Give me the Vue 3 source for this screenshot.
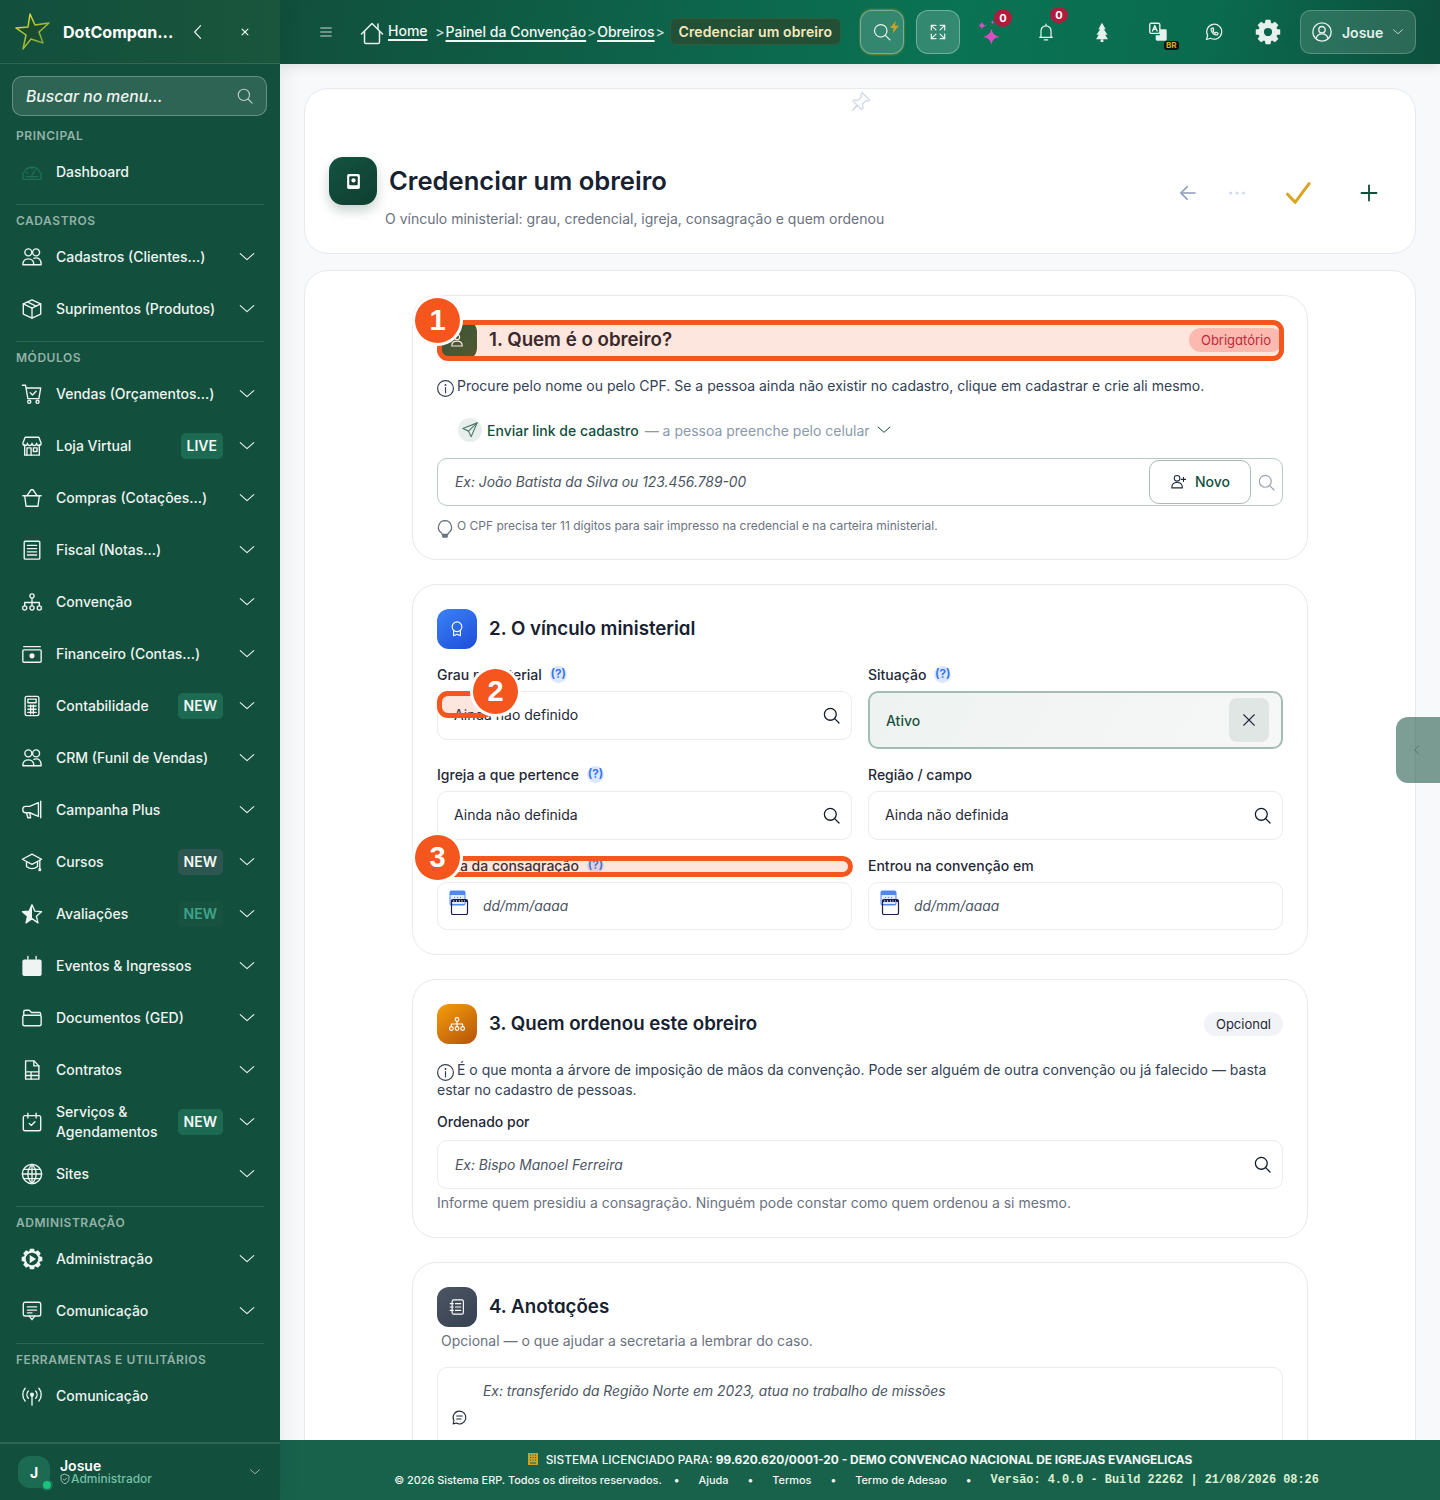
<template>
  <div class="shell">
    <aside class="sidebar">
      <div class="brand">
        <svg class="logo" viewBox="0 0 36 38">
          <defs>
            <linearGradient id="star" x1="0" y1="0" x2="1" y2="1">
              <stop offset="0" stop-color="#f4e83c" />
              <stop offset="1" stop-color="#5c9a34" />
            </linearGradient>
          </defs>
          <path d="M15 1L20 12L34 10L24 19L28 30L16 26L8 36L11 22L1 15L13 14z" fill="#1a4a30" stroke="url(#star)" stroke-width="1.5" stroke-linejoin="round" />
        </svg>
        <span class="brand-name">DotCompan...</span>
        <Icon name="chevL" class="brand-btn" />
        <Icon name="close" class="brand-x" />
      </div>

      <div class="menu-search">
        <span>Buscar no menu...</span>
        <Icon name="search" class="menu-search-ico" />
      </div>

      <nav class="nav">
        <div v-for="(group, i) in menu" :key="group.title" class="group">
          <div v-if="i > 0" class="group-line"></div>
          <div class="group-title">{{ group.title }}</div>
          <div v-for="item in group.items" :key="group.title + item.label" class="item">
            <Icon :name="item.icon" class="item-ico" :class="{ dim: item.dim }" />
            <span class="item-label">{{ item.label }}</span>
            <span v-if="item.tag" class="tag" :class="item.tagClass">{{ item.tag }}</span>
            <Icon v-if="!item.leaf" name="chevD" class="item-chev" />
          </div>
        </div>
      </nav>

      <div class="side-user">
        <div class="avatar">J<i class="online"></i></div>
        <div class="who">
          <b>Josue</b>
          <span><Icon name="shield" class="shield" />Administrador</span>
        </div>
        <Icon name="chevD" class="user-chev" />
      </div>
    </aside>

    <div class="main">
      <header class="topbar">
        <Icon name="menu" class="burger" />
        <div class="crumbs">
          <Icon name="home" class="home" />
          <a class="home-link">Home</a>
          <em class="first">&gt;</em>
          <a>Painel da Convenção</a>
          <em>&gt;</em>
          <a>Obreiros</a>
          <em>&gt;</em>
          <span class="crumb-now">Credenciar um obreiro</span>
        </div>
        <div class="tools">
          <button class="tool-btn glow">
            <Icon name="search" class="tool-search" />
            <svg class="bolt" viewBox="0 0 10 14"><path d="M6.5 0L0 8h4l-1 6 7-8.5H5.5z" fill="#c9a227" /></svg>
          </button>
          <button class="tool-btn"><Icon name="expand" class="tool-expand" /></button>
          <div class="tool spark">
            <Icon name="spark" class="spark-ico" />
            <span class="count">0</span>
          </div>
          <div class="tool bell">
            <Icon name="bell" class="tool-ico" />
            <span class="count">0</span>
          </div>
          <div class="tool tree"><Icon name="tree" class="tool-ico" /></div>
          <div class="tool lang">
            <Icon name="translate" class="tool-ico" />
            <span class="br">BR</span>
          </div>
          <div class="tool wa"><Icon name="whats" class="tool-ico" /></div>
          <div class="tool cog"><Icon name="gearFill" class="cog-ico" /></div>
          <button class="user-btn">
            <Icon name="userCircle" class="user-ico" />
            <span>Josue</span>
            <Icon name="chevD" class="user-btn-chev" />
          </button>
        </div>
      </header>

      <div class="content">
        <section class="card page-card">
          <div class="pin-row"><Icon name="pin" class="pin" /></div>
          <div class="page-head">
            <div>
              <div class="title-row">
                <div class="page-ico">
                  <svg viewBox="0 0 14 16" class="page-ico-svg">
                    <rect x="1" y="1" width="12" height="14" rx="1.5" fill="#fff" />
                    <rect x="3" y="3" width="8" height="8.500" rx="1" fill="#123f30" />
                    <circle cx="7" cy="7" r="2" fill="#fff" />
                  </svg>
                </div>
                <h1>Credenciar um obreiro</h1>
              </div>
              <p class="page-sub">O vínculo ministerial: grau, credencial, igreja, consagração e quem ordenou</p>
            </div>
            <div class="page-actions">
              <Icon name="arrowL" class="act back" />
              <Icon name="dots" class="act more" />
              <Icon name="check" class="act ok" />
              <Icon name="plus" class="act add" />
            </div>
          </div>
        </section>

        <section class="card form-card">
          <div class="block">
            <div class="block-head">
              <div class="block-ico green"><Icon name="userLine" class="block-svg" /></div>
              <h2>1. Quem é o obreiro?</h2>
              <span class="req">Obrigatório</span>
              <div class="mark"></div>
              <div class="num num1">1</div>
            </div>
            <p class="info"><Icon name="info" class="info-ico" />Procure pelo nome ou pelo CPF. Se a pessoa ainda não existir no cadastro, clique em cadastrar e crie ali mesmo.</p>
            <div class="send">
              <span class="send-ico"><Icon name="send" class="send-svg" /></span>
              <strong>Enviar link de cadastro</strong>
              <span class="send-note">— a pessoa preenche pelo celular</span>
              <Icon name="chevD" class="send-chev" />
            </div>
            <div class="box box-main">
              <span class="ph">Ex: João Batista da Silva ou 123.456.789-00</span>
              <button class="novo"><Icon name="userPlus" class="novo-ico" />Novo</button>
              <Icon name="search" class="box-search" />
            </div>
            <p class="tip"><Icon name="bulb" class="tip-ico" />O CPF precisa ter 11 dígitos para sair impresso na credencial e na carteira ministerial.</p>
          </div>

          <div class="block">
            <div class="block-head">
              <div class="block-ico blue"><Icon name="award" class="block-svg" /></div>
              <h2>2. O vínculo ministerial</h2>
            </div>
            <div class="grid">
              <div class="field">
                <label>Grau ministerial <i class="help">(?)</i></label>
                <div class="box"><span class="val">Ainda não definido</span><Icon name="search" class="lens" /></div>
                <div class="mark mark2"></div>
                <div class="num num2">2</div>
              </div>
              <div class="field">
                <label>Situação <i class="help">(?)</i></label>
                <div class="box active">
                  <span>Ativo</span>
                  <button class="clear"><Icon name="close" class="clear-ico" /></button>
                </div>
              </div>
              <div class="field">
                <label>Igreja a que pertence <i class="help">(?)</i></label>
                <div class="box"><span class="val">Ainda não definida</span><Icon name="search" class="lens" /></div>
              </div>
              <div class="field">
                <label>Região / campo</label>
                <div class="box"><span class="val">Ainda não definida</span><Icon name="search" class="lens" /></div>
              </div>
              <div class="field">
                <label>Data da consagração <i class="help">(?)</i></label>
                <div class="box date">
                  <svg class="date-ico" viewBox="0 0 20 25">
                    <rect x="0.5" y="0.5" width="16" height="15" rx="2" fill="#4f86f0" />
                    <rect x="1.5" y="5" width="14" height="9" fill="#dfe9fd" />
                    <path d="M5 7.500h1M8 7.500h1M11 7.500h1" stroke="#4f86f0" />
                    <rect x="2.500" y="9.500" width="16" height="15" rx="1.500" fill="none" stroke="#1c1b4b" stroke-width="1.200" />
                    <path d="M2.500 11h16" stroke="#1c1b4b" stroke-width="2" stroke-dasharray="2 .7" />
                  </svg>
                  <span class="ph">dd/mm/aaaa</span>
                </div>
                <div class="mark mark3"></div>
                <div class="num num3">3</div>
              </div>
              <div class="field">
                <label>Entrou na convenção em</label>
                <div class="box date">
                  <svg class="date-ico" viewBox="0 0 20 25">
                    <rect x="0.5" y="0.5" width="16" height="15" rx="2" fill="#4f86f0" />
                    <rect x="1.5" y="5" width="14" height="9" fill="#dfe9fd" />
                    <path d="M5 7.500h1M8 7.500h1M11 7.500h1" stroke="#4f86f0" />
                    <rect x="2.500" y="9.500" width="16" height="15" rx="1.500" fill="none" stroke="#1c1b4b" stroke-width="1.200" />
                    <path d="M2.500 11h16" stroke="#1c1b4b" stroke-width="2" stroke-dasharray="2 .7" />
                  </svg>
                  <span class="ph">dd/mm/aaaa</span>
                </div>
              </div>
            </div>
          </div>

          <div class="block">
            <div class="block-head">
              <div class="block-ico orange"><Icon name="tree3" class="block-svg" /></div>
              <h2>3. Quem ordenou este obreiro</h2>
              <span class="opt">Opcional</span>
            </div>
            <p class="info info-wrap"><Icon name="info" class="info-ico" />É o que monta a árvore de imposição de mãos da convenção. Pode ser alguém de outra convenção ou já falecido — basta estar no cadastro de pessoas.</p>
            <label class="solo">Ordenado por</label>
            <div class="box">
              <span class="ph">Ex: Bispo Manoel Ferreira</span>
              <Icon name="search" class="lens" />
            </div>
            <p class="note">Informe quem presidiu a consagração. Ninguém pode constar como quem ordenou a si mesmo.</p>
          </div>

          <div class="block">
            <div class="block-head">
              <div class="block-ico slate"><Icon name="notebook" class="block-svg" /></div>
              <h2>4. Anotações</h2>
            </div>
            <p class="notes-sub">Opcional — o que ajudar a secretaria a lembrar do caso.</p>
            <div class="area">
              <span class="ph">Ex: transferido da Região Norte em 2023, atua no trabalho de missões</span>
              <Icon name="chat" class="area-ico" />
            </div>
          </div>
        </section>
      </div>

      <footer class="bottom">
        <div class="lic">
          <svg class="lic-ico" viewBox="0 0 10 12">
            <path d="M0 0h10v12H0z" fill="#c9a227" />
            <path d="M2 2h1M4.500 2h1M7 2h1M2 4.500h1M4.500 4.500h1M7 4.500h1M2 7h1M4.500 7h1M7 7h1M2 10h6" stroke="#18624c" />
          </svg>
          <span>SISTEMA LICENCIADO PARA: <b>99.620.620/0001-20 - DEMO CONVENCAO NACIONAL DE IGREJAS EVANGELICAS</b></span>
        </div>
        <div class="legal">
          <span>© 2026 Sistema ERP. Todos os direitos reservados.</span>
          <i>•</i><a>Ajuda</a>
          <i>•</i><a>Termos</a>
          <i>•</i><a>Termo de Adesao</a>
          <i>•</i><code>Versão: 4.0.0 - Build 22262 | 21/08/2026 08:26</code>
        </div>
      </footer>

      <div class="side-tab"><Icon name="chevL" class="side-tab-ico" /></div>
    </div>
  </div>
</template>

<script setup>
import { h } from 'vue'

// small helpers so the icon table stays readable
const c = (x, y, r) => `M${x - r} ${y}a${r} ${r} 0 1 0 ${2 * r} 0a${r} ${r} 0 1 0 ${-2 * r} 0z`
const r = (x, y, w, hh, q = 0) =>
  `M${x + q} ${y}h${w - 2 * q}a${q} ${q} 0 0 1 ${q} ${q}v${hh - 2 * q}a${q} ${q} 0 0 1 ${-q} ${q}h${-(w - 2 * q)}a${q} ${q} 0 0 1 ${-q} ${-q}v${-(hh - 2 * q)}a${q} ${q} 0 0 1 ${q} ${-q}z`

const gear = (cx, cy, ro, ri, n) => {
  let d = ''
  for (let i = 0; i < n; i++) {
    const a = (i / n) * Math.PI * 2
    const s = Math.PI / n
    const pts = [
      [a - s * 0.5, ro],
      [a + s * 0.5, ro],
      [a + s * 0.85, ri],
      [a + s * 1.15, ri],
    ]
    for (const [ang, rad] of pts) {
      d += `${d ? 'L' : 'M'}${(cx + Math.cos(ang) * rad).toFixed(2)} ${(cy + Math.sin(ang) * rad).toFixed(2)}`
    }
  }
  return d + 'z'
}

const icons = {
  search: [c(10.5, 10.5, 7.5), 'M16 16l5.5 5.5'],
  chevD: ['M3 7.5l9 8 9-8'],
  chevL: ['M15.5 3.5l-8 8.5 8 8.5'],
  close: ['M5 5l14 14M19 5L5 19'],
  plus: ['M12 3v18M3 12h18'],
  check: ['M3 13l6.5 7L21.5 4'],
  arrowL: ['M20.5 12H4', 'M11 4.5L3.5 12l7.5 7.5'],
  dots: ['*' + c(5, 12, 1.7), '*' + c(12, 12, 1.7), '*' + c(19, 12, 1.7)],
  menu: ['M4 6h16M4 12h16M4 18h16'],
  home: ['M1.5 13L12 2.5 22.5 13', 'M18 3v5', 'M4.5 10.5V21a1.5 1.5 0 0 0 1.5 1.5h12a1.5 1.5 0 0 0 1.5-1.5V10.5'],
  expand: ['M4 9.5V4h5.5', 'M4 4l5.5 5.5', 'M20 9.5V4h-5.5', 'M20 4l-5.5 5.5', 'M4 14.5V20h5.5', 'M4 20l5.5-5.5', 'M20 14.5V20h-5.5', 'M20 20l-5.5-5.5'],
  spark: [
    '*M14 9c.8 4.2 2.8 6.2 7 7-4.2.8-6.2 2.8-7 7-.8-4.2-2.8-6.2-7-7 4.2-.8 6.2-2.8 7-7z',
    '*M6 3c.4 2 1.4 3 3.5 3.5C7.4 7 6.4 8 6 10c-.4-2-1.4-3-3.5-3.5C4.6 6 5.6 5 6 3z',
    '*M15 2c.2 1 .7 1.5 1.7 1.7-1 .2-1.5.7-1.7 1.7-.2-1-.7-1.5-1.7-1.7 1-.2 1.5-.7 1.7-1.7z',
  ],
  bell: ['M6 17V10.5a6 6 0 0 1 12 0V17l1.5 1.5h-15z', 'M12 2.5v2', 'M10 21.5h4'],
  tree: ['*M12 2l4 7h-2l4 6h-2.5l3 5H5.5l3-5H6l4-6H8z', '*M10.5 20h3v3h-3z'],
  translate: [r(3, 2.5, 11, 11, 1.5), 'M6 11l2.5-6 2.5 6M7 9h3', '*M14 9h6a1.5 1.5 0 0 1 1.5 1.5V20a1.5 1.5 0 0 1-1.5 1.5h-9A1.5 1.5 0 0 1 9.500 20v-4.500H14z'],
  whats: ['M3 21l1.4-5a9 9 0 1 1 3.5 3.500z', 'M8.500 8c-.5 4 3.500 8 7.500 7.500l1-2-2.500-1.200-1 1c-1.200-.5-2.300-1.600-2.800-2.800l1-1L11 7z'],
  gearFill: ['*' + gear(12, 12, 11.5, 8.8, 8) + c(12, 12, 3.8)],
  gear: ['*' + gear(12, 12, 11.5, 9, 8) + c(12, 12, 6.8), '*M9.500 7.500l7 4.500-7 4.500z'],
  userCircle: [c(12, 12, 10), c(12, 9.500, 3.500), 'M5.500 19c1-3.500 3.500-5 6.500-5s5.500 1.500 6.500 5'],
  pin: ['M14 2.500l7.500 7.500-2 1-1.500-.5-3.500 3.500.5 4-1.500 1.500-4-4-5 5 4.500-5.500-4-4L6 10l4 .5L13.500 7 13 5.500z'],
  userLine: [c(12, 8, 3.5), 'M5 20c0-4 3-6.500 7-6.500s7 2.500 7 6.500z'],
  info: [c(12, 12, 10), '*' + c(12, 7.500, 1.200), 'M12 11v6.500'],
  send: ['M21.500 2.500L2.500 10l7.500 3.500L13.500 21z', 'M21.500 2.500L10 13.500'],
  userPlus: [c(10, 7.500, 4), 'M2.500 21c0-5 3.500-7.500 7.500-7.500s7.500 2.500 7.500 7.500z', 'M19 6v6M16 9h6'],
  bulb: ['M12 2a8 8 0 0 0-4.500 14.500c.7.6 1 1.300 1 2h7c0-.7.3-1.400 1-2A8 8 0 0 0 12 2z', '*M8.500 18.500h7V21a1.500 1.500 0 0 1-1.500 1.500h-4A1.500 1.500 0 0 1 8.500 21z'],
  award: [c(12, 9, 6.500), 'M7.500 14.500V21l4.500-2 4.500 2v-6.500'],
  tree3: [c(12, 6, 2.500), c(4.500, 18, 2.500), c(12, 18, 2.500), c(19.500, 18, 2.500), 'M12 8.500v7M4.500 15.500V12h15v3.500'],
  notebook: [r(5.500, 2.500, 15, 19, 2), 'M10 7.500h7M10 12h7M10 16.500h7', 'M3 7.500h4M3 12h4M3 16.500h4'],
  chat: ['M12 3a9 9 0 0 0-7.800 13.500L3 21l4.500-1.200A9 9 0 1 0 12 3z', 'M8 10h8M8 14h6'],
  shield: ['M12 2.500l8 3v6c0 5-3.500 8.500-8 10-4.500-1.500-8-5-8-10v-6z', 'M8.500 12l2.500 2.500 4.500-4.500'],
  gauge: ['M2.500 20a10 10 0 1 1 19 0z', 'M12 15l3.500-5', 'M6 13h1.500M12 7v1.500M5.500 17h13'],
  users: [c(8, 7, 3.800), c(16.500, 7, 3.800), 'M2 20.500c0-4.500 2.800-6.500 6-6.500s6 2 6 6.500z', 'M14 13.500c.8-.3 1.600-.5 2.500-.5 3.500 0 5.500 3 5.500 7.500h-8'],
  box: ['M12 2l9.500 4.500v11L12 22l-9.500-4.500v-11z', 'M2.500 6.500L12 11l9.500-4.500', 'M12 11v11', 'M7 4.300l9.500 4.500'],
  cart: ['M1.500 2.500h3.500L7.500 17h12l2-11.500H5.500', 'M10 10.500l2.500 2.500 4-4', c(9, 20.500, 1.700), c(18, 20.500, 1.700)],
  store: ['M4 10.500V22h16V10.500', 'M2 9l2.500-6.500h15L22 9a2.500 2.500 0 0 1-5 0 2.500 2.500 0 0 1-5 0 2.500 2.500 0 0 1-5 0 2.500 2.500 0 0 1-5 0z', 'M6.500 22v-8h4.500v8', r(13.500, 14, 4, 4)],
  basket: ['M2 9.500h20', 'M4 9.500L5.500 21h13L20 9.500', 'M6.500 9.500L11 3h2l4.500 6.500'],
  receipt: [r(3.500, 2.500, 17, 19.500, 1), 'M7 7h10M7 10.500h10M7 14h10M7 17.500h10'],
  tiers: [c(12, 5.500, 2.300), c(4, 18.500, 2.300), c(12, 18.500, 2.300), c(20, 18.500, 2.300), 'M12 8v8M4 16v-3.500h16V16'],
  money: [r(2, 7.500, 20, 13.500, 1), 'M3 4h18', '*' + c(12, 14, 2.800)],
  calc: [r(4.500, 1.500, 15, 21, 2), r(7.500, 4.500, 9, 4), 'M7.500 12h9M7.500 15.500h9M7.500 19h9M10.500 11v9.500M13.500 11v9.500'],
  mega: ['M19 4L9.500 8H5a3 3 0 0 0-3 3v1a3 3 0 0 0 3 3h4.500l9.500 4z', 'M6 15l1.500 5.500h3L9.500 15', 'M21.500 2.500v18'],
  grad: ['M12 3.500L1.500 9 12 14.500 22.500 9z', 'M6 12v5c3.500 3 8.500 3 12 0v-5', 'M20.500 10v9', '*M19 19h3v3h-3z'],
  star: ['M12 2l3 6.800 7.400.7-5.600 4.900 1.700 7.300L12 17l-6.500 4.700 1.700-7.300L1.600 9.500 9 8.800z', '*M12 2v15l-6.500 4.700 1.700-7.300L1.600 9.500 9 8.800z'],
  calFill: ['*M1.500 7a2 2 0 0 1 2-2h17a2 2 0 0 1 2 2v14a2 2 0 0 1-2 2h-17a2 2 0 0 1-2-2z', 'M7.500 1.500v3M16.500 1.500v3'],
  folder: ['M3 9V5a1.500 1.500 0 0 1 1.500-1.500H9L11.500 6H20a1.500 1.500 0 0 1 1.500 1.500V9', r(2, 9, 20, 11.500, 2)],
  doc: ['M5 2h9l5.500 5.500V22H5z', 'M14 2v5.500h5.500', 'M5 14h14.500M5 18h14.500M11 14v8'],
  calCheck: [r(2.500, 5, 19, 16.500, 2), 'M7.500 2.500v5M16.500 2.500v5', 'M9 13.500l2.200 2.200 4-4'],
  globe: [c(12, 12, 10.500), 'M12 1.500c-6 6-6 15 0 21M12 1.500c6 6 6 15 0 21', 'M12 1.500v21M1.500 12h21M3 7h18M3 17h18'],
  comment: [r(2.500, 2.500, 19, 15, 2), 'M9 17.500l3 4 3-4', 'M7 7.500h10M7 11h10M7 14h5'],
  antenna: ['*' + c(12, 10.500, 2.200), 'M12 12v10', 'M8 6.500a6 6 0 0 0 0 8', 'M16 6.500a6 6 0 0 1 0 8', 'M4.500 3.500a11 11 0 0 0 0 14', 'M19.500 3.500a11 11 0 0 1 0 14'],
}

const Icon = (props) =>
  h(
    'svg',
    {
      viewBox: '0 0 24 24',
      fill: 'none',
      stroke: 'currentColor',
      'stroke-width': 1.5,
      'stroke-linecap': 'round',
      'stroke-linejoin': 'round',
    },
    icons[props.name].map((d) =>
      d[0] === '*'
        ? h('path', { d: d.slice(1), fill: 'currentColor', stroke: 'none', 'fill-rule': 'evenodd' })
        : h('path', { d })
    )
  )
Icon.props = ['name']

const menu = [
  {
    title: 'PRINCIPAL',
    items: [{ label: 'Dashboard', icon: 'gauge', leaf: true, dim: true }],
  },
  {
    title: 'CADASTROS',
    items: [
      { label: 'Cadastros (Clientes...)', icon: 'users' },
      { label: 'Suprimentos (Produtos)', icon: 'box' },
    ],
  },
  {
    title: 'MÓDULOS',
    items: [
      { label: 'Vendas (Orçamentos...)', icon: 'cart' },
      { label: 'Loja Virtual', icon: 'store', tag: 'LIVE' },
      { label: 'Compras (Cotações...)', icon: 'basket' },
      { label: 'Fiscal (Notas...)', icon: 'receipt' },
      { label: 'Convenção', icon: 'tiers' },
      { label: 'Financeiro (Contas...)', icon: 'money' },
      { label: 'Contabilidade', icon: 'calc', tag: 'NEW' },
      { label: 'CRM (Funil de Vendas)', icon: 'users' },
      { label: 'Campanha Plus', icon: 'mega' },
      { label: 'Cursos', icon: 'grad', tag: 'NEW', tagClass: 'tag-grey' },
      { label: 'Avaliações', icon: 'star', tag: 'NEW', tagClass: 'tag-dim' },
      { label: 'Eventos & Ingressos', icon: 'calFill' },
      { label: 'Documentos (GED)', icon: 'folder' },
      { label: 'Contratos', icon: 'doc' },
      { label: 'Serviços & Agendamentos', icon: 'calCheck', tag: 'NEW' },
      { label: 'Sites', icon: 'globe' },
    ],
  },
  {
    title: 'ADMINISTRAÇÃO',
    items: [
      { label: 'Administração', icon: 'gear' },
      { label: 'Comunicação', icon: 'comment' },
    ],
  },
  {
    title: 'FERRAMENTAS E UTILITÁRIOS',
    items: [{ label: 'Comunicação', icon: 'antenna', leaf: true }],
  },
]
</script>

<style>
html,
body {
  margin: 0;
  background: #f8f9fb;
}
</style>

<style scoped>
* {
  box-sizing: border-box;
}

.shell {
  display: flex;
  height: 1500px;
  overflow: hidden;
  font-family: Inter, "Liberation Sans", sans-serif;
  color: #1f2937;
  font-size: 14px;
}

p,
h1,
h2 {
  margin: 0;
}

button {
  font-family: inherit;
  padding: 0;
  background: none;
  cursor: pointer;
}

/* sidebar */
.sidebar {
  width: 280px;
  flex: none;
  display: flex;
  flex-direction: column;
  background: #124f3d;
  color: #eef4f1;
  box-shadow: 4px 0 18px rgba(15, 40, 30, 0.07);
  z-index: 3;
}

.brand {
  height: 64px;
  flex: none;
  display: flex;
  align-items: center;
  padding-left: 15px;
  border-bottom: 1px solid rgba(255, 255, 255, 0.12);
  background: linear-gradient(90deg, #124f3d, #1a563c);
}

.logo {
  width: 36px;
  height: 38px;
  flex: none;
}

.brand-name {
  width: 111px;
  margin-left: 12px;
  font-size: 16.1px;
  font-weight: 700;
  color: #fff;
  white-space: nowrap;
  font-feature-settings: "cv11";
}

.brand-btn {
  width: 18px;
  height: 18px;
  margin-left: 15px;
  flex: none;
}

.brand-x {
  width: 10px;
  height: 10px;
  margin-left: 33px;
  flex: none;
  stroke-width: 3;
}

.menu-search {
  height: 40px;
  margin: 12px 13px 0 12px;
  padding: 0 12px 0 13px;
  display: flex;
  align-items: center;
  justify-content: space-between;
  flex: none;
  border: 1px solid rgba(255, 255, 255, 0.28);
  border-radius: 10px;
  background: rgba(255, 255, 255, 0.12);
  font-size: 15.7px;
  font-style: italic;
  font-weight: 500;
}

.menu-search-ico {
  width: 18px;
  height: 18px;
  opacity: 0.75;
}

.nav {
  flex: 1;
  min-height: 0;
  padding-top: 4px;
}

.group-line {
  height: 1px;
  margin: 6px 16px 0;
  background: rgba(255, 255, 255, 0.12);
}

.group-title {
  height: 14px;
  margin: 9px 16px 3px;
  font-size: 12px;
  line-height: 14px;
  font-weight: 600;
  letter-spacing: 0.55px;
  color: #92b2a7;
  white-space: nowrap;
}

.item {
  height: 52px;
  display: flex;
  align-items: center;
  padding: 0 24px 0 21px;
}

.item-ico {
  width: 22px;
  height: 22px;
  flex: none;
  margin-right: 13px;
}

.item-ico.dim {
  color: #1f6e55;
}

.item-label {
  flex: 1;
  min-width: 0;
  font-size: 14px;
  font-weight: 500;
  line-height: 20px;
}

.tag {
  height: 26px;
  margin-right: 15px;
  padding: 0 6px;
  border-radius: 5px;
  background: #1d6a52;
  font-size: 14px;
  line-height: 26px;
  font-weight: 600;
  color: #f2f7f5;
  flex: none;
}

.tag-grey {
  background: #2d5650;
}

.tag-dim {
  background: #16523f;
  color: #3fa389;
}

.item-chev {
  width: 18px;
  height: 18px;
  flex: none;
}

.side-user {
  height: 58px;
  flex: none;
  display: flex;
  align-items: center;
  padding: 0 19px 0 18px;
  border-top: 2px solid rgba(255, 255, 255, 0.12);
}

.avatar {
  position: relative;
  width: 32px;
  height: 32px;
  border-radius: 12px;
  background: #1c6a52;
  display: flex;
  align-items: center;
  justify-content: center;
  font-size: 14px;
  font-weight: 700;
  color: #fff;
}

.online {
  position: absolute;
  right: -1px;
  bottom: -1px;
  width: 8px;
  height: 8px;
  border-radius: 50%;
  background: #19c37d;
  box-shadow: 0 0 0 2px #1c6a52;
}

.who {
  flex: 1;
  margin-left: 10px;
  display: flex;
  flex-direction: column;
}

.who b {
  font-size: 14px;
  line-height: 13px;
  font-weight: 600;
  color: #fff;
}

.who span {
  display: flex;
  align-items: center;
  font-size: 12px;
  line-height: 13px;
  font-weight: 500;
  color: #75bfa6;
}

.shield {
  width: 12px;
  height: 12px;
  margin-left: -1px;
  color: #cfe3db;
}

.user-chev {
  width: 12px;
  height: 12px;
  opacity: 0.8;
}

/* main column */
.main {
  position: relative;
  flex: 1;
  min-width: 0;
  display: flex;
  flex-direction: column;
}

.topbar {
  height: 64px;
  flex: none;
  display: flex;
  align-items: center;
  padding: 0 24px 0 38px;
  background: linear-gradient(100deg, #114f3c 0%, #0a7354 58%, #0a6b4e 80%, #0d4f3c 100%);
  color: #e6f0ec;
  box-shadow: 0 2px 12px rgba(15, 40, 30, 0.12);
  z-index: 2;
}

.burger {
  width: 16px;
  height: 16px;
  flex: none;
  opacity: 0.85;
}

.crumbs {
  display: flex;
  align-items: center;
  margin: -2px 0 0 26px;
  font-size: 14px;
  font-weight: 500;
}

.crumbs a {
  color: #f1f7f4;
  text-decoration: underline;
  text-underline-offset: 3px;
  text-decoration-thickness: 1.5px;
}

.home {
  width: 24px;
  height: 24px;
  flex: none;
  position: relative;
  top: 2px;
}

.home-link {
  margin-left: 4px;
  position: relative;
  top: -1px;
}

.crumbs em {
  font-style: normal;
  width: 11px;
  text-align: center;
  opacity: 0.85;
}

.crumbs em.first {
  margin-left: 7px;
  width: 11px;
}

.crumb-now {
  margin-left: 4px;
  height: 27px;
  padding: 0 8px;
  line-height: 25px;
  border: 1px solid #2f5b3e;
  border-radius: 6px;
  background: #234f37;
  color: #f5e9bb;
  font-weight: 600;
  letter-spacing: 0.1px;
  white-space: nowrap;
}

.tools {
  flex: 1;
  display: flex;
  align-items: center;
  justify-content: flex-end;
}

.tool-btn {
  position: relative;
  width: 44px;
  height: 44px;
  margin-right: 12px;
  border: 1px solid rgba(255, 255, 255, 0.32);
  border-radius: 12px;
  background: rgba(255, 255, 255, 0.17);
  color: #e6f0ec;
  display: flex;
  align-items: center;
  justify-content: center;
}

.tool-btn.glow {
  box-shadow: 0 -1px 2px rgba(201, 162, 39, 0.5), 0 1px 2px rgba(201, 162, 39, 0.5);
}

.tool-search {
  width: 20px;
  height: 20px;
}

.bolt {
  position: absolute;
  top: 9px;
  right: 4px;
  width: 9px;
  height: 14px;
}

.tool-expand {
  width: 20px;
  height: 20px;
}

.tool {
  position: relative;
  display: flex;
  align-items: center;
  justify-content: center;
}

.tool-ico {
  width: 20px;
  height: 20px;
}

.spark {
  width: 22px;
  height: 22px;
  margin-left: 6px;
}

.spark-ico {
  width: 28px;
  height: 28px;
  color: #d84fc4;
  flex: none;
}

.count {
  position: absolute;
  width: 18px;
  height: 18px;
  border-radius: 50%;
  background: #b01c3e;
  color: #fff;
  font-size: 11px;
  font-weight: 700;
  line-height: 18px;
  text-align: center;
}

.spark .count {
  top: -12px;
  right: -12px;
}

.bell {
  width: 20px;
  height: 22px;
  margin-left: 36px;
}

.bell .count {
  top: -14px;
  right: -12px;
  height: 16px;
  line-height: 16px;
}

.tree {
  margin-left: 35px;
}

.tree .tool-ico {
  width: 22px;
  height: 22px;
}

.lang {
  margin-left: 34px;
}

.lang .tool-ico {
  width: 22px;
  height: 22px;
}

.br {
  position: absolute;
  top: 20px;
  left: 17px;
  padding: 0 2px;
  border-radius: 3px;
  background: #111;
  color: #d8a72a;
  font-size: 8px;
  line-height: 9px;
  font-weight: 700;
}

.wa {
  margin-left: 35px;
}

.cog {
  margin-left: 31px;
}

.cog-ico {
  width: 26px;
  height: 26px;
}

.user-btn {
  width: 116px;
  height: 44px;
  margin-left: 19px;
  padding: 0 11px 0 10px;
  display: flex;
  align-items: center;
  flex: none;
  border: 1px solid rgba(255, 255, 255, 0.22);
  border-radius: 10px;
  background: rgba(255, 255, 255, 0.13);
  color: #e6f0ec;
  font-size: 14px;
  font-weight: 600;
}

.user-ico {
  width: 22px;
  height: 22px;
  margin-right: 9px;
}

.user-btn-chev {
  width: 12px;
  height: 12px;
  margin-left: auto;
}

/* content */
.content {
  flex: 1;
  min-height: 0;
  overflow: hidden;
  padding: 24px;
  background: #f8f9fb;
}

.card {
  background: #fff;
  border: 1px solid #e6e9ee;
  border-radius: 24px;
}

.page-card {
  height: 166px;
  padding: 0 24px;
  margin-bottom: 16px;
}

.pin-row {
  height: 24px;
  padding-top: 1px;
  text-align: center;
}

.pin {
  width: 24px;
  height: 24px;
  color: #d3dce8;
}

.page-head {
  display: flex;
  align-items: center;
  justify-content: space-between;
  margin-top: 44px;
}

.title-row {
  display: flex;
  align-items: center;
  gap: 12px;
  margin-bottom: 4px;
}

.page-ico {
  width: 48px;
  height: 48px;
  border-radius: 14px;
  background: linear-gradient(145deg, #14523f, #0f3f30);
  box-shadow: 0 6px 12px rgba(15, 60, 45, 0.22);
  display: flex;
  align-items: center;
  justify-content: center;
}

.page-ico-svg {
  width: 15px;
  height: 17px;
}

h1 {
  font-size: 25.6px;
  line-height: 30px;
  font-weight: 600;
  color: #17212f;
  font-feature-settings: "cv11";
}

.page-sub {
  margin-left: 56px;
  line-height: 20px;
  color: #6b7280;
}

.page-actions {
  display: flex;
  align-items: center;
  margin-right: 12px;
}

.act {
  flex: none;
}

.back {
  width: 20px;
  height: 20px;
  color: #8d9cba;
  stroke-width: 2;
  margin-right: 28px;
}

.more {
  width: 22px;
  height: 22px;
  color: #d3dbe6;
  margin-right: 36px;
}

.ok {
  width: 28px;
  height: 28px;
  color: #d9a520;
  stroke-width: 2.6;
  margin-right: 47px;
}

.add {
  width: 20px;
  height: 20px;
  color: #0f4f3c;
  stroke-width: 2.2;
}

.form-card {
  padding: 24px 107px;
  display: flex;
  flex-direction: column;
  gap: 24px;
}

.block {
  padding: 24px;
  border: 1px solid #e6e9ee;
  border-radius: 24px;
  background: #fff;
}

.block-head {
  position: relative;
  display: flex;
  align-items: center;
  gap: 12px;
  height: 40px;
}

.block-ico {
  width: 40px;
  height: 40px;
  border-radius: 12px;
  flex: none;
  display: flex;
  align-items: center;
  justify-content: center;
  color: #fff;
}

.block-svg {
  width: 18px;
  height: 18px;
}

.green {
  background: linear-gradient(145deg, #14523f, #3a5a35);
}

.blue {
  background: linear-gradient(145deg, #3b82f6, #1d4ed8);
}

.orange {
  background: linear-gradient(145deg, #f59e0b, #b45309);
}

.slate {
  background: linear-gradient(145deg, #4b5563, #374151);
}

h2 {
  flex: 1;
  padding-bottom: 2px;
  font-size: 18.7px;
  font-weight: 600;
  color: #17212f;
  font-feature-settings: "cv11";
}

.req,
.opt {
  height: 24px;
  padding: 0 12px;
  border-radius: 12px;
  font-size: 13px;
  line-height: 24px;
  font-feature-settings: "cv11";
}

.req {
  background: #fecaca;
  color: #b91c3c;
}

.opt {
  background: #f1f3f6;
  color: #1f2937;
}

/* numbered callouts over the form */
.mark {
  position: absolute;
  left: 0;
  right: -1px;
  top: 0;
  bottom: -1px;
  border: 5px solid #f4561d;
  border-radius: 11px;
  background: rgba(244, 86, 29, 0.15);
}

.mark2 {
  right: auto;
  bottom: auto;
  top: 28px;
  width: 56px;
  height: 27px;
}

.mark3 {
  bottom: auto;
  top: 2px;
  height: 21px;
}

.num {
  position: absolute;
  width: 45px;
  height: 45px;
  border-radius: 50%;
  background: #f4561d;
  box-shadow: 0 0 0 3px #fff;
  color: #fff;
  font-family: "Liberation Sans", sans-serif;
  font-size: 29px;
  font-weight: 700;
  line-height: 45px;
  text-align: center;
}

.num1 {
  left: -22px;
  top: -22px;
}

.num2 {
  left: 36px;
  top: 6px;
}

.num3 {
  left: -22px;
  top: -19px;
}

.info {
  margin-top: 16px;
  line-height: 20px;
  color: #334155;
}

.info-ico {
  width: 19px;
  height: 19px;
  margin: -3px 2.5px -3px -1.5px;
  vertical-align: -4px;
}

.send {
  display: flex;
  align-items: center;
  margin: 22px 0 0 21px;
  height: 24px;
}

.send-ico {
  width: 24px;
  height: 24px;
  border-radius: 50%;
  background: #e8eeeb;
  display: flex;
  align-items: center;
  justify-content: center;
  color: #4b7a6a;
}

.send-svg {
  width: 18px;
  height: 18px;
}

.send strong {
  margin-left: 5px;
  font-weight: 500;
  color: #124f3d;
}

.send-note {
  margin-left: 6px;
  color: #8a99ad;
}

.send-chev {
  width: 16px;
  height: 16px;
  margin-left: 6px;
  color: #124f3d;
}

.box {
  height: 49px;
  display: flex;
  align-items: center;
  justify-content: space-between;
  padding: 0 10px 0 16px;
  border: 1px solid #e8ecf1;
  border-radius: 10px;
  background: #fff;
}

.box-main {
  height: 48px;
  margin-top: 16px;
  padding: 0 6px 0 16px;
  border-color: #b6c9c2;
}

.ph {
  font-style: italic;
  font-size: 13.85px;
  color: #4b5563;
}

.box > .ph:first-child {
  margin-left: 1px;
}

.val {
  margin-top: -2px;
  color: #1f2937;
}

.novo {
  width: 102px;
  height: 44px;
  margin-left: auto;
  margin-right: 6px;
  padding-bottom: 1px;
  display: flex;
  align-items: center;
  justify-content: center;
  gap: 8px;
  border: 1px solid #a9bdb6;
  border-radius: 10px;
  background: #fff;
  font-size: 14px;
  font-weight: 500;
  color: #124f3d;
}

.novo-ico {
  width: 17px;
  height: 17px;
  color: #1f2937;
}

.box-search {
  width: 19px;
  height: 19px;
  color: #9ca3af;
  flex: none;
}

.lens {
  width: 19px;
  height: 19px;
  color: #111827;
  flex: none;
  stroke-width: 1.6;
}

.tip {
  height: 19px;
  margin-top: 10px;
  font-size: 12px;
  line-height: 19px;
  color: #6b7280;
}

.tip-ico {
  width: 20px;
  height: 20px;
  margin: -3px 2px -3px -2px;
  vertical-align: -6px;
}

.grid {
  margin-top: 14px;
  display: grid;
  grid-template-columns: 1fr 1fr;
  column-gap: 16px;
  row-gap: 14px;
}

.field {
  position: relative;
  min-width: 0;
}

label {
  display: flex;
  align-items: center;
  gap: 8px;
  height: 24px;
  margin-bottom: 4px;
  padding-bottom: 2px;
  color: #1f2937;
  font-weight: 500;
}

.help {
  width: 17px;
  height: 17px;
  border-radius: 50%;
  background: #dbe7fd;
  color: #2f6fed;
  font-size: 12px;
  font-style: normal;
  font-weight: 600;
  line-height: 16px;
  text-align: center;
}

.active {
  height: 58px;
  padding: 0 12px 0 16px;
  border: 2px solid #a3bdb3;
  background: linear-gradient(120deg, #eef2f0, #f6f8f7);
  color: #1a5440;
  font-weight: 500;
}

.clear {
  width: 40px;
  height: 44px;
  border: 0;
  border-radius: 8px;
  background: #e0e6e3;
  display: flex;
  align-items: center;
  justify-content: center;
  color: #1f2937;
}

.clear-ico {
  width: 18px;
  height: 18px;
}

.date {
  height: 48px;
  justify-content: flex-start;
  padding-left: 11px;
}

.date-ico {
  width: 20px;
  height: 25px;
  margin: -8px 14px 0 0;
  flex: none;
}

.info-wrap {
  margin-top: 16px;
}

.solo {
  height: 20px;
  margin: 12px 0 8px;
}

.note {
  margin-top: 4px;
  line-height: 20px;
  color: #6b7280;
}

.notes-sub {
  margin: 4px 0 16px 4px;
  line-height: 20px;
  color: #6b7280;
}

.area {
  position: relative;
  height: 120px;
  padding: 14px 45px;
  border: 1px solid #e8ecf1;
  border-radius: 10px;
}

.area-ico {
  position: absolute;
  left: 13px;
  top: 41px;
  width: 17px;
  height: 17px;
  color: #1f2937;
}

/* bottom bar */
.bottom {
  height: 60px;
  flex: none;
  padding: 11px 0 0;
  background: #18624c;
  color: #f1f7f4;
  text-align: center;
  z-index: 2;
}

.lic {
  height: 16px;
  display: flex;
  align-items: center;
  justify-content: center;
  gap: 8px;
  font-size: 11.9px;
  font-weight: 500;
}

.lic b {
  font-weight: 700;
}

.lic-ico {
  width: 10px;
  height: 12px;
}

.legal {
  margin-top: 3px;
  height: 20px;
  padding-right: 7px;
  display: flex;
  align-items: center;
  justify-content: center;
  font-size: 10.9px;
  font-weight: 500;
}

.legal i {
  font-style: normal;
  margin: 0 19px 0 12px;
}

.legal a {
  margin-right: 7px;
}

.legal code {
  font-family: "Liberation Mono", monospace;
  font-size: 11.9px;
  font-weight: 700;
  color: #dcefd2;
}

.side-tab {
  position: absolute;
  right: 0;
  top: 717px;
  width: 44px;
  height: 66px;
  padding-left: 15px;
  display: flex;
  align-items: center;
  border-radius: 12px 0 0 12px;
  background: rgba(18, 79, 61, 0.55);
  color: rgba(18, 79, 61, 0.55);
  z-index: 2;
}

.side-tab-ico {
  width: 12px;
  height: 12px;
}
</style>
